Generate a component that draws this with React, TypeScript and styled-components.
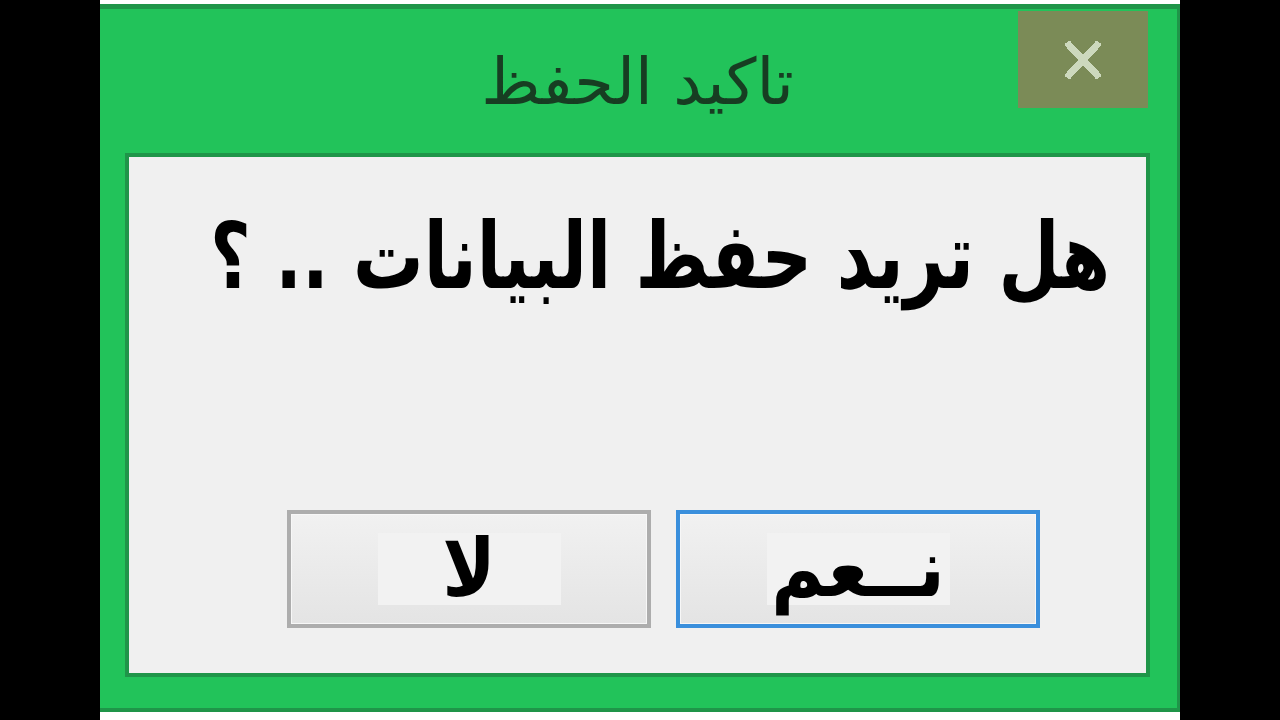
import styled, { createGlobalStyle } from 'styled-components';

const GlobalStyle = createGlobalStyle`
  html, body {
    margin: 0;
    padding: 0;
    background: #000;
  }
  body {
    font-family: "DejaVu Sans", "Noto Sans", sans-serif;
  }
`;

const Page = styled.div`
  display: flex;
  width: 1280px;
  height: 720px;
  padding-left: 100px;
  box-sizing: border-box;
  background: #000;
`;

const Sheet = styled.div`
  width: 1080px;
  height: 720px;
  padding: 4px 0 8px;
  box-sizing: border-box;
  background: #fff;
`;

const Window = styled.div`
  display: flex;
  flex-direction: column;
  height: 100%;
  box-sizing: border-box;
  background: #22c35a;
  border-top: 5px solid #1f9549;
  border-right: 3px solid #1f9549;
  border-bottom: 4px solid #1f9549;
  padding: 0 27px 31px 25px;
`;

const TitleBar = styled.div`
  display: grid;
  grid-template-columns: 1fr auto 1fr;
  height: 144px;
`;

const Title = styled.h1`
  grid-column: 2;
  margin: 28px 0 0;
  font-family: "DejaVu Sans", sans-serif;
  font-weight: normal;
  font-size: 64px;
  line-height: 90px;
  color: #173d22;
  direction: rtl;
  white-space: nowrap;
`;

const CloseButton = styled.button`
  grid-column: 3;
  justify-self: end;
  align-self: start;
  display: flex;
  align-items: center;
  justify-content: center;
  width: 130px;
  height: 97px;
  margin: 2px 2px 0 0;
  border: 0;
  padding: 0;
  background: #7b8b57;
  cursor: pointer;
`;

const Panel = styled.div`
  flex: 1;
  display: flex;
  flex-direction: column;
  background: #f0f0f0;
  border: 4px solid #1f9549;
`;

const Question = styled.p`
  margin: 30px 36px 0 0;
  font-family: "DejaVu Sans Condensed", "DejaVu Sans", sans-serif;
  font-stretch: condensed;
  font-weight: bold;
  font-size: 92px;
  line-height: 140px;
  color: #000;
  direction: rtl;
  text-align: right;
  white-space: nowrap;
  transform: scaleX(0.85);
  transform-origin: right center;
`;

const Actions = styled.div`
  display: flex;
  justify-content: flex-end;
  gap: 25px;
  margin-top: auto;
  padding: 0 106px 45px 0;
`;

const Button = styled.button<{ $focused?: boolean }>`
  display: flex;
  align-items: center;
  justify-content: center;
  width: 364px;
  height: 118px;
  padding: 0;
  box-sizing: border-box;
  border: 4px solid ${(p) => (p.$focused ? '#3a8fdc' : '#adadad')};
  background: linear-gradient(#f1f1f1, #e4e4e4);
  box-shadow: inset 0 0 0 1px #f7f7f7;
  cursor: pointer;
`;

const Label = styled.span`
  display: flex;
  align-items: center;
  justify-content: center;
  width: 183px;
  height: 72px;
  background: #f2f2f2;
  font-family: "DejaVu Sans Condensed", "DejaVu Sans", sans-serif;
  font-weight: bold;
  font-size: 80px;
  line-height: 1;
  color: #000;
  direction: rtl;
  white-space: nowrap;
`;

const CloseIcon = () => (
  <svg width="36" height="38" viewBox="0 0 36 38" shapeRendering="crispEdges">
    <path d="M4 4 L32 34 M32 4 L4 34" stroke="#cdd9bd" strokeWidth="7" strokeLinecap="square" fill="none" />
  </svg>
);

const App = () => {
  return (
    <>
      <GlobalStyle />
      <Page>
        <Sheet>
          <Window>
            <TitleBar>
              <Title>تاكيد الحفظ</Title>
              <CloseButton aria-label="إغلاق">
                <CloseIcon />
              </CloseButton>
            </TitleBar>
            <Panel>
              <Question>هل تريد حفظ البيانات .. ؟</Question>
              <Actions>
                <Button>
                  <Label>لا</Label>
                </Button>
                <Button $focused>
                  <Label>نــعم</Label>
                </Button>
              </Actions>
            </Panel>
          </Window>
        </Sheet>
      </Page>
    </>
  );
};

export default App;
